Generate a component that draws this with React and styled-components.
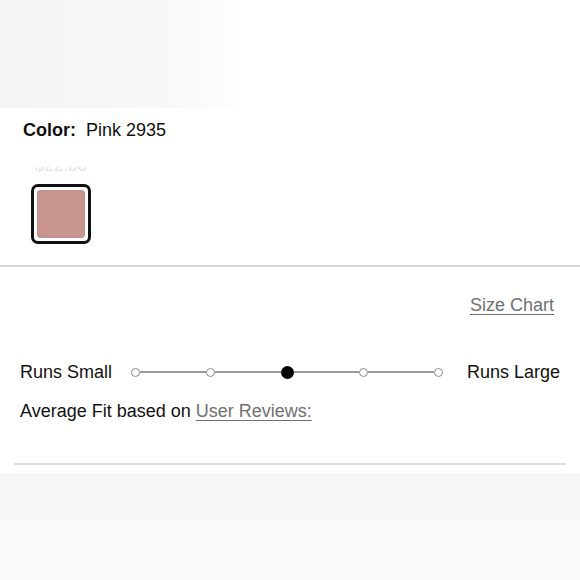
import React from "react";
import styled, { createGlobalStyle } from "styled-components";

const Global = createGlobalStyle`
  html, body { margin: 0; padding: 0; background: #fff; }
  body { font-family: "Liberation Sans", Arial, sans-serif; color: #111; }
`;

const Page = styled.div`
  width: 580px;
  height: 580px;
  overflow: hidden;
  display: flex;
  flex-direction: column;
  background: #fff;
`;

const TopImage = styled.div`
  height: 108px;
  flex: none;
  background: linear-gradient(to right, #f5f4f4 0, #f8f7f7 150px, #fcfbfb 210px, #fff 245px);
`;

const ColorSection = styled.section`
  padding: 11px 0 0 23px;
  height: 157px;
  box-sizing: border-box;
  flex: none;
`;

const ColorLine = styled.div`
  font-size: 18px;
  line-height: 22px;
  display: flex;
  gap: 10px;
`;

const Label = styled.span`
  font-weight: 700;
`;

const PriceGhost = styled.div`
  margin: 15px 0 0 12px;
  display: inline-block;
  font-size: 17px;
  line-height: 20px;
  color: transparent;
  background: linear-gradient(to bottom, #fff 0, #fff 48%, #e2e2e2 58%, #e2e2e2 100%);
  -webkit-background-clip: text;
  background-clip: text;
`;

const Swatch = styled.div`
  margin: 8px 0 0 8px;
  width: 60px;
  height: 60px;
  box-sizing: border-box;
  border: 3px solid #111;
  border-radius: 7px;
  padding: 3px;
  background: #fff;
`;

const SwatchFill = styled.div`
  width: 100%;
  height: 100%;
  border-radius: 4px;
  background: ${(p) => p.$color};
  box-shadow: inset 0 0 2px rgba(150, 100, 100, 0.4);
`;

const Divider = styled.hr`
  flex: none;
  border: none;
  height: 2px;
  margin: ${(p) => (p.$inset ? "0 14px" : "0")};
  background: ${(p) => (p.$inset ? "#dedede" : "#d6d6d6")};
`;

const FitSection = styled.section`
  flex: none;
  height: 196px;
  box-sizing: border-box;
  padding: 26px 0 0 20px;
  display: flex;
  flex-direction: column;
`;

const SizeChartRow = styled.div`
  display: flex;
  justify-content: flex-end;
  padding-right: 26px;
`;

const Link = styled.a`
  color: #707070;
  text-decoration: underline;
  text-underline-offset: 3px;
  font-size: 18px;
  line-height: 24px;
  cursor: pointer;
`;

const FitRow = styled.div`
  margin-top: 43px;
  display: flex;
  align-items: center;
  padding-right: 20px;
  font-size: 18px;
  line-height: 24px;
`;

const Track = styled.div`
  width: 312px;
  display: flex;
  align-items: center;
  margin: 0 auto 0 19px;
`;

const Dot = styled.span`
  flex: none;
  box-sizing: border-box;
  width: ${(p) => (p.$active ? "13px" : "9px")};
  height: ${(p) => (p.$active ? "13px" : "9px")};
  border-radius: 50%;
  border: ${(p) => (p.$active ? "none" : "1.5px solid #8c8c8c")};
  background: ${(p) => (p.$active ? "#000" : "#fff")};
`;

const Segment = styled.span`
  flex: 1;
  height: 1.5px;
  background: #9a9a9a;
`;

const AverageLine = styled.div`
  margin-top: 15px;
  font-size: 18px;
  line-height: 24px;
`;

const BottomArea = styled.div`
  flex: 1;
  margin-top: 8px;
  background: linear-gradient(to bottom, #f7f7f7, #fafafa);
`;

const positions = [0, 1, 2, 3, 4];
const active = 2;

export default function App() {
  return (
    <Page>
      <Global />
      <TopImage />
      <ColorSection>
        <ColorLine>
          <Label>Color:</Label>
          <span>Pink 2935</span>
        </ColorLine>
        <PriceGhost>$22.00</PriceGhost>
        <Swatch>
          <SwatchFill $color="#c8958f" />
        </Swatch>
      </ColorSection>
      <Divider />
      <FitSection>
        <SizeChartRow>
          <Link>Size Chart</Link>
        </SizeChartRow>
        <FitRow>
          <span>Runs Small</span>
          <Track>
            {positions.map((i) => (
              <React.Fragment key={i}>
                {i > 0 && <Segment />}
                <Dot $active={i === active} />
              </React.Fragment>
            ))}
          </Track>
          <span>Runs Large</span>
        </FitRow>
        <AverageLine>
          Average Fit based on <Link>User Reviews:</Link>
        </AverageLine>
      </FitSection>
      <Divider $inset />
      <BottomArea />
    </Page>
  );
}
